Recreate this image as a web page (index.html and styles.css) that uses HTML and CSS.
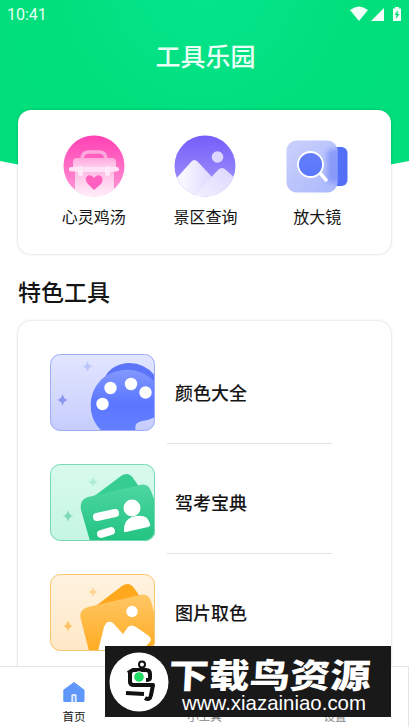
FILE: index.html
```html
<!DOCTYPE html>
<html lang="zh-CN">
<head>
<meta charset="utf-8">
<title>工具乐园</title>
<link rel="stylesheet" href="styles.css">
</head>
<body>
<div class="app">
  <svg class="backdrop" viewBox="0 0 409 200" aria-hidden="true">
    <defs><radialGradient id="green" gradientUnits="userSpaceOnUse" cx="204" cy="-20" r="240"><stop stop-color="#04e58e"/><stop offset=".6" stop-color="#01df7d"/><stop offset="1" stop-color="#01de7b"/></radialGradient></defs>
    <path d="M0 0H409V161Q204 204 0 161Z" fill="url(#green)"/>
  </svg>
  <div class="status">
    <span>10:41</span>
    <svg width="53" height="16" viewBox="0 0 53 16" fill="#f1fff8">
      <path d="M0 4Q9-3 18 4L9 15Z"/><path d="M21 15L34 2V15Z"/>
      <path d="M45 1h4v1.500h2V15h-8V2.500h2z"/><path d="M48 4l-3.500 5h2L46 13l3.500-5h-2z" fill="#01dc7c"/>
    </svg>
  </div>
  <h1>工具乐园</h1>
  <main>
    <section class="card quick">
      <div class="tool">
        <svg width="62" height="62" viewBox="0 0 62 62">
          <defs><linearGradient id="pink" x2="0" y2="1"><stop stop-color="#ff40b3"/><stop offset="1" stop-color="#ff9ad8"/></linearGradient><linearGradient id="box" x2="0" y2="1"><stop stop-color="#ffb9e3"/><stop offset="1" stop-color="#fff0fb"/></linearGradient><linearGradient id="lid" x2="0" y2="1"><stop stop-color="#ffa9de"/><stop offset="1" stop-color="#ffe0f4"/></linearGradient><clipPath id="circle"><circle cx="31" cy="31" r="30.500"/></clipPath></defs>
          <g clip-path="url(#circle)"><path d="M0 0h62v62H0z" fill="url(#pink)"/>
          <path d="M19 24v-1q1-6 7-6h10q6 0 7 6v1" fill="none" stroke="#ffa8de" stroke-width="3.500"/>
          <path d="M12 35H51V62H12Z" fill="url(#box)"/>
          <rect x="10" y="23" width="43" height="14" rx="4" fill="url(#lid)"/>
          <rect x="6" y="32" width="50" height="4.500" rx="2" fill="#ffe2f5"/>
          <rect x="15" y="31" width="5" height="10" rx="2.500" fill="#ffe9f8"/><rect x="42" y="31" width="5" height="10" rx="2.500" fill="#ffe9f8"/>
          <path d="M31 55L25 49C19 42 27 37 31 43C35 37 43 42 38 49Z" fill="#ff60bf"/></g>
        </svg><span>心灵鸡汤</span>
      </div>
      <div class="tool">
        <svg width="62" height="62" viewBox="0 0 62 62">
          <defs><linearGradient id="violet" x2="0" y2="1"><stop stop-color="#735dfb"/><stop offset="1" stop-color="#a69cfa"/></linearGradient><linearGradient id="hill"><stop offset=".2" stop-color="#f8f6ff"/><stop offset="1" stop-color="#d0c7fc"/></linearGradient><linearGradient id="hill2" x1="1" x2="0" y2="1"><stop stop-color="#dcd5ff"/><stop offset="1" stop-color="#f4f1ff"/></linearGradient></defs>
          <g clip-path="url(#circle)"><path d="M0 0h62v62H0z" fill="url(#violet)"/><circle cx="43.500" cy="22" r="5.800" fill="#dcd6ff"/><path d="M0 46L17 27Q20 23 24 27L52 57V62H0Z" fill="url(#hill)"/><path d="M19 62L44 35Q48 31 52 35L62 44V62Z" fill="url(#hill2)"/></g>
        </svg><span>景区查询</span>
      </div>
      <div class="tool">
        <svg width="62" height="62" viewBox="0 0 62 62">
          <defs><linearGradient id="glass" x2="1" y2="1"><stop stop-color="#cbd1fb"/><stop offset="1" stop-color="#aab8fc"/></linearGradient><linearGradient id="lens" x2="0" y2="1"><stop stop-color="#657cf7"/><stop offset="1" stop-color="#5978ff"/></linearGradient><clipPath id="pane"><rect x=".5" y="5.500" width="51" height="52" rx="10"/></clipPath><filter id="blur" x="-50%" y="-50%" width="200%" height="200%"><feGaussianBlur stdDeviation="2.500"/></filter></defs>
          <rect x="38" y="12" width="23.500" height="39" rx="6" fill="#536ff5"/><rect x=".5" y="5.500" width="51" height="52" rx="10" fill="url(#glass)"/>
          <g clip-path="url(#pane)"><rect x="41" y="14" width="20" height="34" rx="5" fill="#7187f9" opacity=".65" filter="url(#blur)"/></g>
          <path d="M34 38l6 7" stroke="#fff" stroke-width="3.500" stroke-linecap="round"/><circle cx="24.500" cy="29.500" r="12.500" fill="url(#lens)" stroke="#fff" stroke-width="1.800"/>
        </svg><span>放大镜</span>
      </div>
    </section>
    <h2>特色工具</h2>
    <section class="card features">
      <article class="feature">
        <svg class="thumb" viewBox="0 0 105 77">
          <defs><linearGradient id="blueBg" x2="0" y2="1"><stop stop-color="#e2e6ff"/><stop offset="1" stop-color="#c6cdfd"/></linearGradient><linearGradient id="palette" x2="0" y2="1"><stop stop-color="#8398ff"/><stop offset=".55" stop-color="#5b76ff"/><stop offset="1" stop-color="#6480ff"/></linearGradient><clipPath id="frame"><rect width="105" height="77" rx="10"/></clipPath></defs>
          <g clip-path="url(#frame)"><path d="M0 0h105v77H0z" fill="url(#blueBg)"/>
          <path d="M37.500 7q1 5 5.500 5.500-4.500.5-5.500 5.500-1-5-5.500-5.500 4.500-.5 5.500-5.500z" fill="#bdc7fc"/><path d="M12.500 40q1 5.500 6 6-5 .5-6 6-1-5.500-6-6 5-.5 6-6z" fill="#8898f1"/>
          <path d="M52 30Q58 10 79 9Q96 9 107 24V50H60Z" fill="#5b74f8"/><path d="M52 77C31 58 41 22 68 17C82 13 98 18 109 33V61Q101 66 92 67Q83 69 86 77Z" fill="url(#palette)"/>
          <g fill="#fff"><circle cx="60.500" cy="34" r="6.200"/><circle cx="81" cy="30" r="6.200"/><circle cx="95.500" cy="38.500" r="6.200"/><circle cx="52.500" cy="50" r="6.200"/></g></g>
          <rect x=".5" y=".5" width="104" height="76" rx="10" fill="none" stroke="#9eacf5"/>
        </svg><h3>颜色大全</h3>
      </article>
      <article class="feature">
        <svg class="thumb" viewBox="0 0 105 77">
          <defs><linearGradient id="mint" x2="0" y2="1"><stop stop-color="#d8faed"/><stop offset="1" stop-color="#c5f6e3"/></linearGradient><linearGradient id="greenCard" x2="0" y2="1"><stop stop-color="#4ed6a1"/><stop offset="1" stop-color="#22c381"/></linearGradient></defs>
          <g clip-path="url(#frame)"><path d="M0 0h105v77H0z" fill="url(#mint)"/><path d="M43 13q1 4.500 5.500 5-4.500.5-5.500 5-1-4.500-5.500-5 4.500-.5 5.500-5z" fill="#b0edd2"/><path d="M18 46q1 5.500 5.500 6-4.500.5-5.500 6-1-5.500-5.500-6 4.500-.5 5.500-6z" fill="#7edab5"/>
          <path d="M43 33L71 12Q78 7 83 14L90 24Z" fill="#35cd91"/><path d="M40 77L31 46Q29 36 38 33L90 21Q98 19 101 27L106 40V77Z" fill="url(#greenCard)"/>
          <g stroke="#fff" stroke-width="8" stroke-linecap="round"><path d="M47 53l18-4M51 70l10-3"/></g><circle cx="82" cy="44" r="8.500" fill="#fff"/><path d="M74 68Q73 54 86 52Q98 50 100 60Q101 62 98 63L76 68Z" fill="#fff"/></g>
          <rect x=".5" y=".5" width="104" height="76" rx="10" fill="none" stroke="#78d8b1"/>
        </svg><h3>驾考宝典</h3>
      </article>
      <article class="feature">
        <svg class="thumb" viewBox="0 0 105 77">
          <defs><linearGradient id="cream" x2="0" y2="1"><stop stop-color="#fff3e0"/><stop offset="1" stop-color="#ffe8c7"/></linearGradient><linearGradient id="orange" x2="0" y2="1"><stop stop-color="#ffc765"/><stop offset="1" stop-color="#ffab22"/></linearGradient></defs>
          <g clip-path="url(#frame)"><path d="M0 0h105v77H0z" fill="url(#cream)"/><path d="M43 13q1 4.500 5.500 5-4.500.5-5.500 5-1-4.500-5.500-5 4.500-.5 5.500-5z" fill="#ffd594"/><path d="M18 46q1 5.500 5.500 6-4.500.5-5.500 6-1-5.500-5.500-6 4.500-.5 5.500-6z" fill="#ffc36a"/>
          <path d="M43 34L72 12Q79 7 84 14L91 24Z" fill="#ffa71d"/><path d="M39 77L31 46Q28 36 38 33L90 21Q98 19 101 27L106 45V77Z" fill="url(#orange)"/><circle cx="82" cy="37.500" r="5.700" fill="#fff"/><path d="M48 77L54 53Q57 45 63 49L73 60L78 53Q81 50 86 53L99 62Q103 66 98 70L91 77Z" fill="#fff"/></g>
          <rect x=".5" y=".5" width="104" height="76" rx="10" fill="none" stroke="#f8c570"/>
        </svg><h3>图片取色</h3>
      </article>
    </section>
  </main>
  <nav>
    <div class="tab"><svg width="22" height="22" viewBox="0 0 22 22"><path d="M11 1.500L21 9V20.500H.8V9Z" fill="#6097fb" stroke="#6097fb" stroke-linejoin="round"/><path d="M8.300 21v-6.500q0-1.500 1.500-1.500h2.400q1.500 0 1.500 1.500V21" fill="#dce8ff"/><path d="M11 15v6" stroke="#6097fb" stroke-width="1.500"/></svg><span>首页</span></div>
    <div class="tab"><span>小工具</span></div>
    <div class="tab"><span>设置</span></div>
  </nav>
  <aside class="banner">
    <svg width="60" height="60" viewBox="0 0 60 60"><circle cx="30" cy="30" r="29.500" fill="#fff"/><g fill="none" stroke="#111" stroke-width="4" stroke-linejoin="round"><path d="M19 21L24 18H37Q41 18 41 22V26Q41 28 37 28M21 21V30Q21 33 25 33H44L42 43Q41 49 36 46M17 41L35 42"/><circle cx="33" cy="12.500" r="3" stroke-width="2"/></g><circle cx="30" cy="25" r="5.300" fill="#22db62" stroke="#fff"/></svg>
    <div class="brand"><svg width="208" height="39" viewBox="0 0 208 39"><text class="brand-name" x="0" y="36" textLength="202" lengthAdjust="spacingAndGlyphs" transform="skewX(-3)">下载鸟资源</text></svg><svg width="208" height="24" viewBox="0 0 208 24"><text class="brand-url" x="12" y="19" textLength="184" lengthAdjust="spacingAndGlyphs">www.xiazainiao.com</text></svg></div>
  </aside>
</div>
</body>
</html>
```
FILE: styles.css
```css
* { box-sizing: border-box; }
body { margin: 0; font-family: Roboto, "Noto Sans CJK SC", sans-serif; color: #151515; }
.app { position: relative; width: 409px; height: 727px; overflow: hidden; display: flex; flex-direction: column; background: #fff; isolation: isolate; }
.backdrop { position: absolute; top: 0; left: 0; width: 409px; height: 200px; z-index: -1; }
.status { height: 28px; padding: 6px 6px 0 7px; display: flex; justify-content: space-between; color: #e4fff2; font-size: 16px; line-height: 18px; font-weight: 400; }
h1 { margin: 0; height: 82px; padding: 10px 0 0 2px; text-align: center; color: #e9fff5; font-size: 25px; line-height: 40px; font-weight: 500; }
main { flex: 1; min-height: 0; padding: 0 18px; }
.card { background: #fff; border-radius: 13px; box-shadow: 0 0 3px #0003; }
.quick { height: 144px; padding: 25px 18px 0 20px; display: grid; grid-template-columns: repeat(3, 1fr); }
.tool { display: flex; flex-direction: column; align-items: center; gap: 9px; font-size: 16px; line-height: 24px; }
.tool svg { display: block; }
h2 { margin: 24px 0 12px; font-size: 23px; line-height: 31px; font-weight: 500; }
.features { height: 430px; padding: 33px 32px; }
.feature { height: 110px; display: flex; align-items: flex-start; }
.thumb { width: 105px; height: 77px; flex: none; }
h3 { width: 165px; height: 90px; margin: 0 0 0 12px; padding-left: 8px; border-bottom: 1px solid #e3e3e3; font-size: 18px; line-height: 79px; font-weight: 500; }
nav { z-index: 1; height: 61px; display: grid; grid-template-columns: 148px 113px 148px; background: #fff; border: 1px solid #e5e5e5; border-width: 1px 1px 0 0; }
.tab { display: flex; flex-direction: column; align-items: center; justify-content: flex-end; padding-bottom: 1px; gap: 6px; font-size: 11.500px; line-height: 17px; }
.tab:nth-child(n+2) { color: #888; }
.banner { position: absolute; z-index: 2; left: 105px; top: 646px; width: 286px; height: 71px; padding: 6px 4px; display: flex; gap: 1px; background: #191919; }
.banner > svg { flex: none; }
.brand { display: flex; flex-direction: column; }
.brand svg { display: block; overflow: visible; }
.brand-name { fill: #fff; font: 900 34px "Noto Sans CJK SC", sans-serif; }
.brand-url { fill: #fff; font: 21px "Liberation Sans", sans-serif; }
```
